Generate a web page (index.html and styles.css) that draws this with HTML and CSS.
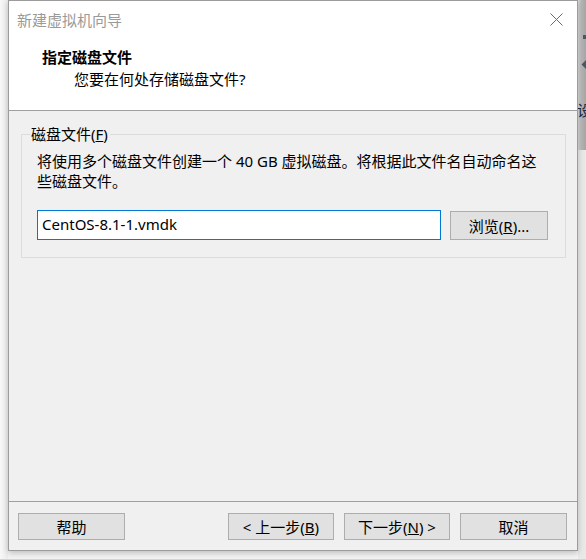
FILE: index.html
```html
<!DOCTYPE html>
<html lang="zh-CN">
<head>
<meta charset="utf-8">
<title>新建虚拟机向导</title>
<link rel="stylesheet" href="styles.css">
</head>
<body>
<div class="gutter"></div>
<div class="window">
  <div class="header">
    <div class="titlebar">
      <span class="title">新建虚拟机向导</span>
      <svg class="close" width="13" height="13" viewBox="0 0 13 13"><path d="M0.5 0.5 L12.5 12.5 M12.5 0.5 L0.5 12.5" stroke="#6b6b6b" stroke-width="1" fill="none"/></svg>
    </div>
    <div class="heading">指定磁盘文件</div>
    <div class="subheading">您要在何处存储磁盘文件?</div>
  </div>
  <div class="body">
    <fieldset class="group">
      <legend class="legend">磁盘文件(<u>F</u>)</legend>
      <p class="desc">将使用多个磁盘文件创建一个 40 GB 虚拟磁盘。将根据此文件名自动命名这些磁盘文件。</p>
      <div class="filerow">
        <div class="input">CentOS-8.1-1.vmdk</div>
        <div class="btn browse">浏览(<u>R</u>)...</div>
      </div>
    </fieldset>
  </div>
  <div class="footer">
    <div class="btn">帮助</div>
    <div class="spacer"></div>
    <div class="btn">&lt; 上一步(<u>B</u>)</div>
    <div class="btn">下一步(<u>N</u>) &gt;</div>
    <div class="btn">取消</div>
  </div>
</div>
<div class="side">
  <div class="side-top">
    <span class="mark sq"></span>
    <span class="mark dia"></span>
    <span class="side-glyph">设</span>
  </div>
  <div class="side-bottom"></div>
</div>
</body>
</html>
```

FILE: styles.css
```css
* { box-sizing: border-box; }
html, body { margin: 0; padding: 0; }
body {
  width: 586px;
  height: 559px;
  overflow: hidden;
  display: flex;
  background: #f3f3f3;
  font-family: "Noto Sans", "Noto Sans CJK SC", sans-serif;
  font-size: 15px;
  color: #000;
}
.gutter { width: 8px; flex: none; background: linear-gradient(to right, #f8f8f8, #ececec); }
.window {
  width: 570px;
  height: 551px;
  flex: none;
  border: 1px solid #9c9c9c;
  background: #f0f0f0;
  display: flex;
  flex-direction: column;
  box-shadow: 0 2px 6px rgba(0,0,0,0.22);
  position: relative;
  z-index: 1;
}
.header {
  height: 110px;
  background: #fff;
  border-bottom: 1px solid #a0a0a0;
  flex: none;
  padding-top: 9px;
}
.titlebar {
  height: 20px;
  display: flex;
  align-items: center;
  justify-content: space-between;
  padding: 0 14px 0 8px;
}
.title { color: #9a9a9a; line-height: 20px; }
.close { display: block; margin-top: -1px; }
.heading {
  font-weight: 700;
  line-height: 20px;
  margin-top: 17px;
  padding-left: 33px;
}
.subheading {
  line-height: 20px;
  margin-top: 2px;
  padding-left: 65px;
}
.body {
  flex: 1;
  padding: 13px 11px 0 12px;
  border-bottom: 1px solid #a0a0a0;
}
.group {
  margin: 0;
  border: 1px solid #dcdcdc;
  padding: 0 16px 17px 15px;
  min-width: 0;
}
.legend {
  margin-left: -7px;
  padding: 0 2px 0 1px;
  line-height: 20px;
}
.desc {
  margin: 7px 0 0 0;
  line-height: 20px;
}
.filerow {
  display: flex;
  align-items: flex-start;
  margin-top: 19px;
}
.input {
  width: 404px;
  height: 30px;
  border: 1px solid #0078d7;
  background: #fff;
  padding-left: 4px;
  line-height: 27px;
}
.btn {
  width: 106px;
  height: 27px;
  background: #e1e1e1;
  border: 1px solid #adadad;
  display: flex;
  align-items: center;
  justify-content: center;
  line-height: 20px;
  flex: none;
}
.browse {
  width: 98px;
  height: 29px;
  margin-left: 9px;
  margin-top: 1px;
}
.footer {
  height: 48px;
  flex: none;
  display: flex;
  gap: 10px;
  padding: 11px 10px 0 9px;
}
.footer .btn:first-child { width: 107px; }
.footer .btn:last-child { width: 107px; }
.spacer { flex: 1; }
.side {
  width: 8px;
  flex: none;
  display: flex;
  flex-direction: column;
  overflow: hidden;
}
.side-top {
  height: 150px;
  background: linear-gradient(to right, #dcdcdc 0px, #b8b8b8 3px, #a4a4a4 8px);
  position: relative;
}
.side-bottom { flex: 1; background: #e9e9e9; }
.mark { position: absolute; background: #4a5866; }
.sq { left: 5px; top: 35px; width: 3px; height: 4px; }
.dia { left: 5px; top: 61px; width: 7px; height: 7px; transform: rotate(45deg); }
.side-glyph {
  position: absolute;
  left: -1px;
  top: 100px;
  font-size: 15px;
  line-height: 20px;
  color: #1a2a40;
}
```
